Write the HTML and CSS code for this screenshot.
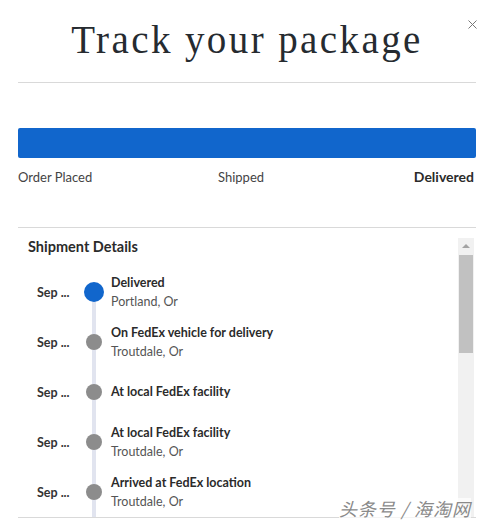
FILE: index.html
```html
<!DOCTYPE html>
<html>
<head>
<meta charset="utf-8">
<link rel="stylesheet" href="styles.css">
</head>
<body>
<div class="modal">
  <button class="close" aria-label="Close">
    <svg width="9" height="9" viewBox="0 0 9 9"><path d="M0.5 0.5L8.5 8.5M8.5 0.5L0.5 8.5" stroke="#777" stroke-width="1" fill="none"/></svg>
  </button>
  <header class="header">
    <h1 class="title">Track your package</h1>
  </header>
  <section class="progress">
    <div class="bar"></div>
    <div class="steps">
      <span class="step">Order Placed</span>
      <span class="step mid">Shipped</span>
      <span class="step active">Delivered</span>
    </div>
  </section>
  <section class="details">
    <div class="scroll">
      <h2 class="details-title">Shipment Details</h2>
      <ul class="timeline">
        <li class="row first">
          <span class="date">Sep ...</span>
          <span class="track"><span class="dot current"></span></span>
          <div class="info"><div class="event">Delivered</div><div class="place">Portland, Or</div></div>
        </li>
        <li class="row">
          <span class="date">Sep ...</span>
          <span class="track"><span class="dot"></span></span>
          <div class="info"><div class="event">On FedEx vehicle for delivery</div><div class="place">Troutdale, Or</div></div>
        </li>
        <li class="row">
          <span class="date">Sep ...</span>
          <span class="track"><span class="dot"></span></span>
          <div class="info"><div class="event">At local FedEx facility</div></div>
        </li>
        <li class="row">
          <span class="date">Sep ...</span>
          <span class="track"><span class="dot"></span></span>
          <div class="info"><div class="event">At local FedEx facility</div><div class="place">Troutdale, Or</div></div>
        </li>
        <li class="row">
          <span class="date">Sep ...</span>
          <span class="track"><span class="dot"></span></span>
          <div class="info"><div class="event">Arrived at FedEx location</div><div class="place">Troutdale, Or</div></div>
        </li>
      </ul>
    </div>
    <div class="scrollbar">
      <span class="arrow"></span>
      <span class="thumb"></span>
    </div>
  </section>
</div>
<div class="watermark">头条号 / 海淘网</div>
</body>
</html>
```
FILE: styles.css
```css
* { box-sizing: border-box; }
html, body { margin: 0; padding: 0; background: #fff; }
body {
  width: 485px;
  height: 524px;
  overflow: hidden;
  font-family: Lato, "Open Sans", sans-serif;
  color: #2b2b2b;
  position: relative;
}
.modal {
  margin: 0 9px 0 18px;
  position: relative;
}
.close {
  position: absolute;
  right: -2px;
  top: 19px;
  width: 11px;
  height: 11px;
  padding: 1px;
  border: 0;
  background: transparent;
  display: flex;
}
.header {
  height: 83px;
  border-bottom: 1px solid #d9d9d9;
  display: flex;
  justify-content: center;
  padding-top: 16px;
}
.title {
  margin: 0;
  font-family: "Liberation Serif", "DejaVu Serif", serif;
  font-weight: normal;
  font-size: 39px;
  line-height: 48px;
  letter-spacing: 2.4px;
  color: #262b30;
}
.progress {
  padding-top: 45px;
  height: 145px;
  border-bottom: 1px solid #d9d9d9;
}
.bar {
  height: 30px;
  background: #1166cc;
  border-radius: 2px;
}
.steps {
  display: flex;
  justify-content: space-between;
  margin-top: 11px;
  font-size: 13px;
  line-height: 16px;
  color: #444;
}
.step.mid { margin-right: 24px; }
.step.active { font-weight: 700; font-size: 14px; color: #2b2b2b; margin-right: 2px; }
.details {
  display: flex;
  height: 290px;
  border-bottom: 1px solid #d9d9d9;
}
.scroll {
  flex: 1;
  overflow: hidden;
  padding-left: 10px;
}
.details-title {
  margin: 0;
  height: 39px;
  padding-top: 10px;
  font-size: 14.5px;
  line-height: 18px;
  font-weight: 700;
  color: #2b2b2b;
}
.timeline {
  list-style: none;
  margin: 0;
  padding: 0;
}
.row {
  display: flex;
  align-items: center;
  height: 50px;
}
.date {
  width: 56px;
  padding-left: 9px;
  font-size: 12.5px;
  font-weight: 700;
  color: #333;
}
.track {
  width: 20px;
  height: 50px;
  display: flex;
  align-items: center;
  justify-content: center;
  background: linear-gradient(#e1e4ef, #e1e4ef) center / 4px 100% no-repeat;
}
.row.first .track {
  background-position: center bottom;
  background-size: 4px 50%;
}
.dot {
  width: 16px;
  height: 16px;
  border-radius: 50%;
  background: #8c8c8c;
}
.dot.current {
  width: 20px;
  height: 20px;
  background: #1166cc;
}
.info {
  margin-left: 7px;
  display: flex;
  flex-direction: column;
  gap: 3px;
}
.event {
  font-size: 12.5px;
  line-height: 16px;
  font-weight: 700;
  color: #2b2b2b;
}
.place {
  font-size: 12.5px;
  line-height: 16px;
  color: #555;
}
.scrollbar {
  width: 16px;
  margin-top: 10px;
  margin-right: 2px;
  background: #f1f1f1;
  display: flex;
  flex-direction: column;
  align-items: center;
}
.arrow {
  margin-top: 6px;
  width: 0;
  height: 0;
  border-left: 4px solid transparent;
  border-right: 4px solid transparent;
  border-bottom: 4px solid #a3a3a3;
}
.thumb {
  margin-top: 7px;
  width: 14px;
  height: 98px;
  background: #c1c1c1;
}
.watermark {
  position: absolute;
  right: 14px;
  bottom: 6px;
  font-family: "Noto Sans CJK SC", sans-serif;
  font-size: 18px;
  line-height: 20px;
  color: #8a8a8a;
  font-style: italic;
  letter-spacing: 1px;
  background: rgba(255,255,255,0.7);
}
```
